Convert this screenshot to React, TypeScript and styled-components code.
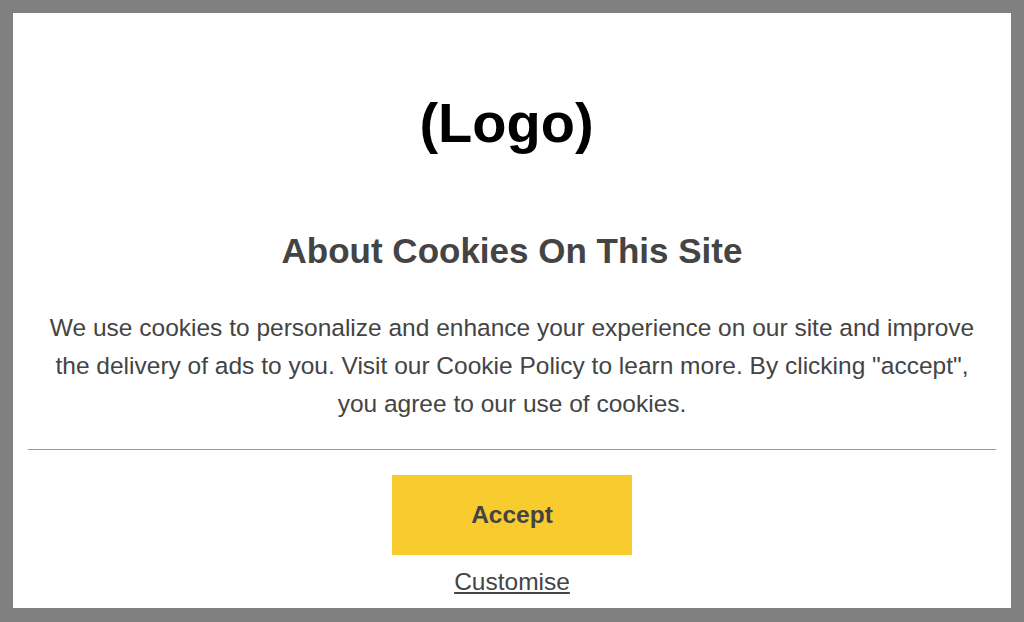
import styled, { createGlobalStyle } from 'styled-components';

const GlobalStyle = createGlobalStyle`
  html, body {
    margin: 0;
    padding: 0;
    background: #808080;
  }

  body {
    font-family: "Liberation Sans", Arial, Helvetica, sans-serif;
  }
`;

const Frame = styled.div`
  padding: 13px 13px 14px;
`;

const Panel = styled.div`
  height: 595px;
  box-sizing: border-box;
  background: #ffffff;
  padding: 78px 15px 0;
  display: flex;
  flex-direction: column;
  align-items: center;
  color: #444444;
`;

const Logo = styled.div`
  margin-right: 11px;
  font-size: 56px;
  line-height: 64px;
  font-weight: 700;
  color: #000000;
`;

const Title = styled.h2`
  margin: 76px 0 0;
  font-size: 35px;
  line-height: 40px;
  font-weight: 700;
`;

const Text = styled.p`
  margin: 38px 0 0;
  max-width: 940px;
  font-size: 24.5px;
  line-height: 38px;
  text-align: center;
`;

const Divider = styled.hr`
  align-self: stretch;
  margin: 26px 0 0;
  border: 0;
  border-top: 1px solid #9a9a9a;
`;

const AcceptButton = styled.button`
  margin-top: 25px;
  width: 240px;
  height: 80px;
  border: 0;
  background: #f8cb2e;
  color: #444444;
  font-family: inherit;
  font-size: 24.5px;
  font-weight: 700;
  cursor: pointer;
`;

const LinkButton = styled.a`
  margin-top: 14px;
  font-size: 24.5px;
  line-height: 26px;
  color: #444444;
  text-decoration: underline;
  cursor: pointer;
`;

export default function App() {
  return (
    <>
      <GlobalStyle />
      <Frame>
        <Panel>
          <Logo>(Logo)</Logo>
          <Title>About Cookies On This Site</Title>
          <Text>
            We use cookies to personalize and enhance your experience on our site and improve the delivery
            of ads to you. Visit our Cookie Policy to learn more. By clicking "accept", you agree to our use
            of cookies.
          </Text>
          <Divider />
          <AcceptButton>Accept</AcceptButton>
          <LinkButton>Customise</LinkButton>
        </Panel>
      </Frame>
    </>
  );
}
